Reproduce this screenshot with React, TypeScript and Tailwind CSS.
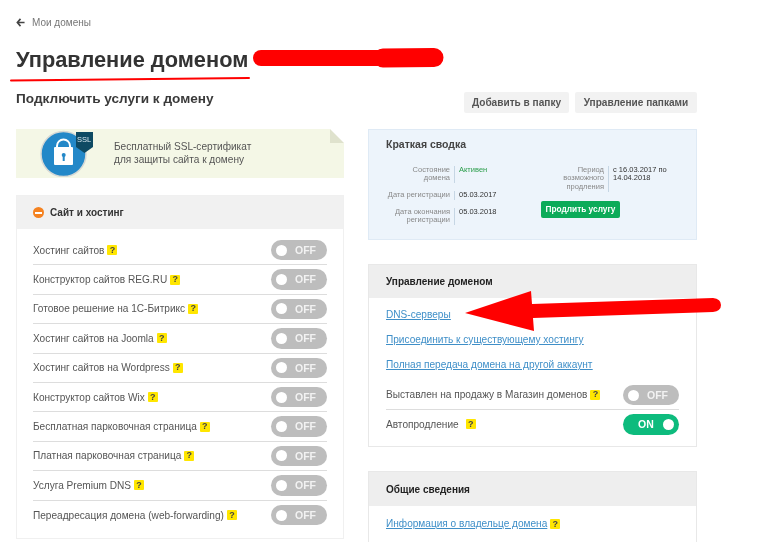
import React from "react";

const Q = ({ className = "" }: { className?: string }) => (
  <span className={`inline-flex h-[10px] w-[10px] items-center justify-center rounded-[1px] bg-[#ffe600] text-[9px] font-bold leading-none text-[#444] ${className}`}>?</span>
);

const Toggle = ({ on = false }: { on?: boolean }) =>
  on ? (
    <div className="flex h-[20.5px] w-[56px] shrink-0 items-center justify-between rounded-full bg-[#0dbb7d] pl-[15px] pr-[5px]">
      <span className="text-[10.5px] font-bold leading-none text-white">ON</span>
      <span className="h-[11px] w-[11px] rounded-full bg-white" />
    </div>
  ) : (
    <div className="flex h-[20.5px] w-[56px] shrink-0 items-center justify-between rounded-full bg-[#bdbdbd] pl-[5px] pr-[11px]">
      <span className="h-[11px] w-[11px] rounded-full bg-white" />
      <span className="text-[10.5px] font-bold leading-none text-[#f2f2f2]">OFF</span>
    </div>
  );

const services = [
  "Хостинг сайтов",
  "Конструктор сайтов REG.RU",
  "Готовое решение на 1С-Битрикс",
  "Хостинг сайтов на Joomla",
  "Хостинг сайтов на Wordpress",
  "Конструктор сайтов Wix",
  "Бесплатная парковочная страница",
  "Платная парковочная страница",
  "Услуга Premium DNS",
  "Переадресация домена (web-forwarding)",
];

const Field = ({ label, value, valueClass = "text-[#333]", h }: { label: React.ReactNode; value: React.ReactNode; valueClass?: string; h: string }) => (
  <div className={`flex ${h}`}>
    <div className="w-[69px] border-r border-[#c6d6e4] pr-[4px] text-right text-[#888]">{label}</div>
    <div className={`pl-[4px] ${valueClass}`}>{value}</div>
  </div>
);

export default function App() {
  return (
    <div className="relative h-[542px] w-[768px] overflow-hidden bg-white font-['Liberation_Sans',Arial,sans-serif] text-[#444] blur-[0.4px]">
      <div className="px-[16px] pt-[16px]">
        <div className="flex h-[13px] items-center gap-[7px] text-[10px] text-[#777]">
          <svg width="9" height="9" viewBox="0 0 10 10" className="text-[#444]">
            <path d="M5 1 1.5 5 5 9M1.5 5H9.5" fill="none" stroke="currentColor" strokeWidth="1.8" />
          </svg>
          <span>Мои домены</span>
        </div>
        <h1 className="mt-[17px] text-[21.8px] font-bold leading-[28px] text-[#333]">Управление доменом</h1>
        <div className="mt-[18px] flex h-[34px] items-start justify-between pr-[55px]">
          <h2 className="mt-[-3px] text-[13.6px] font-bold leading-[20px] text-[#3a3a3a]">Подключить услуги к домену</h2>
          <div className="flex gap-[6px] text-[10.1px] font-bold text-[#555]">
            <div className="flex h-[21px] w-[105px] items-center justify-center rounded-[2px] bg-[#f2f2f2]">Добавить в папку</div>
            <div className="flex h-[21px] w-[122px] items-center justify-center rounded-[2px] bg-[#f2f2f2]">Управление папками</div>
          </div>
        </div>

        <div className="mt-[3px] flex items-start gap-[24px]">
          {/* left */}
          <div className="w-[328px] shrink-0">
            <div className="relative flex h-[49px] items-center bg-[#f4f7e6] pl-[98px] text-[10.1px] leading-[12.5px] text-[#555]">
              <div>
                Бесплатный SSL-сертификат
                <br />
                для защиты сайта к домену
              </div>
              <svg className="absolute left-[24px] top-[1px]" width="56" height="47" viewBox="0 0 56 47">
                <circle cx="23.5" cy="24" r="22.5" fill="#2388c8" stroke="#d5d8d5" strokeWidth="1.5" />
                <path d="M17 18v-2a6.5 6.5 0 0 1 13 0v2" fill="none" stroke="#fff" strokeWidth="2" />
                <rect x="14" y="17" width="19" height="18" rx="1" fill="#fff" />
                <rect x="22.7" y="25" width="2" height="6" fill="#2388c8" />
                <circle cx="23.7" cy="25" r="2" fill="#2388c8" />
                <path d="M36 2h17v15l-8.5 6-8.5-6z" fill="#0e4a63" />
              </svg>
              <span className="absolute left-[61px] top-[6px] text-[7.5px] leading-[10px] text-[#d7e7ef]">SSL</span>
              <div className="absolute right-0 top-0 h-0 w-0 border-b-[14px] border-r-[14px] border-b-[#dfe2cd] border-r-transparent bg-white" />
            </div>

            <div className="mt-[17px] border border-[#f0f0f0]">
              <div className="flex h-[33px] items-center gap-[6px] bg-[#f1f1f1] pl-[16px] text-[10px] font-bold text-[#333]">
                <span className="flex h-[11px] w-[11px] items-center justify-center rounded-full bg-[#f58220]">
                  <span className="h-[2px] w-[7px] bg-white" />
                </span>
                Сайт и хостинг
              </div>
              <div className="px-[16px] pt-[7px] pb-[8px]">
                {services.map((s, i) => (
                  <div key={s} className={`flex h-[29.4px] items-center justify-between ${i < services.length - 1 ? "border-b border-[#ddd]" : ""}`}>
                    <span className="flex items-center gap-[3px] text-[10.1px] text-[#555]">
                      {s}
                      <Q />
                    </span>
                    <Toggle />
                  </div>
                ))}
              </div>
            </div>
          </div>

          {/* right */}
          <div className="w-[329px] shrink-0">
            <div className="h-[111px] border border-[#dfeaf5] bg-[#edf4fb] pl-[17px] pt-[8px]">
              <div className="text-[10.5px] font-bold leading-[13px] text-[#444]">Краткая сводка</div>
              <div className="mt-[15px] flex text-[7.5px] leading-[8.4px]">
                <div className="flex w-[155px] flex-col gap-[8px]">
                  <Field h="h-[17px]" label={<>Состояние<br />домена</>} value="Активен" valueClass="text-[#2a9d4a]" />
                  <Field h="h-[9px]" label="Дата регистрации" value="05.03.2017" />
                  <Field h="h-[17px]" label={<>Дата окончания<br />регистрации</>} value="05.03.2018" />
                </div>
                <div className="flex flex-col">
                  <div className="flex h-[26px]">
                    <div className="w-[68px] border-r border-[#c6d6e4] pr-[4px] text-right text-[#888]">Период<br />возможного<br />продления</div>
                    <div className="pl-[4px] text-[#333]">с 16.03.2017 по<br />14.04.2018</div>
                  </div>
                  <div className="mt-[9px] flex h-[17px] w-[79px] items-center justify-center rounded-[2px] bg-[#0cab59] text-[8.3px] font-bold text-white">Продлить услугу</div>
                </div>
              </div>
            </div>

            <div className="mt-[24px] border border-[#e8e8e8]">
              <div className="flex h-[33px] items-center bg-[#eeeeee] pl-[17px] text-[10px] font-bold text-[#222]">Управление доменом</div>
              <div className="px-[17px] pt-[10px] pb-[7px] text-[10.1px]">
                <div className="flex flex-col gap-[11px] leading-[14px] text-[#3f8fc8] underline">
                  <a>DNS-серверы</a>
                  <a>Присоединить к существующему хостингу</a>
                  <a>Полная передача домена на другой аккаунт</a>
                </div>
                <div className="mt-[9px] flex h-[29px] items-center justify-between border-b border-[#ddd] text-[#555]">
                  <span className="flex items-center gap-[3px]">Выставлен на продажу в Магазин доменов <Q /></span>
                  <Toggle />
                </div>
                <div className="flex h-[29px] items-center justify-between text-[#555]">
                  <span className="flex items-center gap-[7px]">Автопродление <Q /></span>
                  <Toggle on />
                </div>
              </div>
            </div>

            <div className="mt-[24px] h-[80px] border border-[#e8e8e8]">
              <div className="flex h-[34px] items-center bg-[#eeeeee] pl-[17px] text-[10px] font-bold text-[#222]">Общие сведения</div>
              <div className="flex items-center gap-[3px] pl-[17px] pt-[11px] text-[10.1px] leading-[14px]">
                <a className="text-[#3f8fc8] underline">Информация о владельце домена</a>
                <Q />
              </div>
            </div>
          </div>
        </div>
      </div>

      {/* hand-drawn red marks over the page */}
      <svg className="pointer-events-none absolute left-0 top-0" width="768" height="542" viewBox="0 0 768 542">
        <path d="M11 80.5C90 79.5 170 79 249 78" fill="none" stroke="#f00" strokeWidth="2" strokeLinecap="round" />
        <path d="M261 58H378" fill="none" stroke="#f00" strokeWidth="16" strokeLinecap="round" />
        <path d="M383 58 434 57.5" fill="none" stroke="#f00" strokeWidth="19" strokeLinecap="round" />
        <path d="M465 313 531 291 532 304 713 298Q721 299 721 305Q721 311 713 312L533 318 534 331Z" fill="#f00" />
      </svg>
    </div>
  );
}
